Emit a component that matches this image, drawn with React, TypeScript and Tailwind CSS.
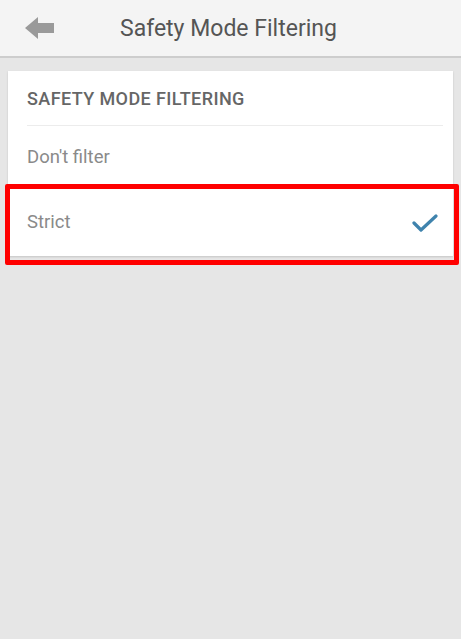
export default function App() {
  return (
    <div className="w-[461px] h-[639px] bg-[#e6e6e6] font-['Roboto','Liberation_Sans',sans-serif] overflow-hidden">
      <div className="h-[58px] bg-[#f4f4f4] border-b-2 border-[#cdcdcd] flex items-center">
        <svg width="30" height="24" viewBox="0 0 30 24" className="ml-[25px]">
          <path d="M0 12 L13 1 L13 7 L29 7 L29 17 L13 17 L13 23 Z" fill="#9a9a9a" />
        </svg>
        <h1 className="ml-[65px] text-[23px] text-[#555] leading-none">Safety Mode Filtering</h1>
      </div>

      <div className="px-[8px] pt-[13px]">
        <div className="relative bg-white shadow-[0_1px_2px_rgba(0,0,0,0.15)]">
          <div className="h-[54px] flex items-center px-[19px]">
            <span className="text-[18px] font-medium text-[#666] tracking-[0.4px]">SAFETY MODE FILTERING</span>
          </div>
          <div className="ml-[19px] mr-[10px] h-px bg-[#ececec]" />
          <div className="h-[63px] flex items-center px-[19px]">
            <span className="text-[18.5px] text-[#8a8a8a]">Don't filter</span>
          </div>
          <div className="h-[67px] flex items-center justify-between pl-[19px] pr-[15px]">
            <span className="text-[18.5px] text-[#8a8a8a]">Strict</span>
            <svg width="26" height="20" viewBox="0 0 26 20">
              <path d="M2 10 L9 17 L24 3" fill="none" stroke="#3f83ad" strokeWidth="3.2" strokeLinecap="round" strokeLinejoin="round" />
            </svg>
          </div>
          <div className="absolute left-[-3px] right-[-6px] top-[113px] bottom-[-9px] border-[5px] border-[#f00] rounded-[2px] pointer-events-none" />
        </div>
      </div>
    </div>
  );
}
